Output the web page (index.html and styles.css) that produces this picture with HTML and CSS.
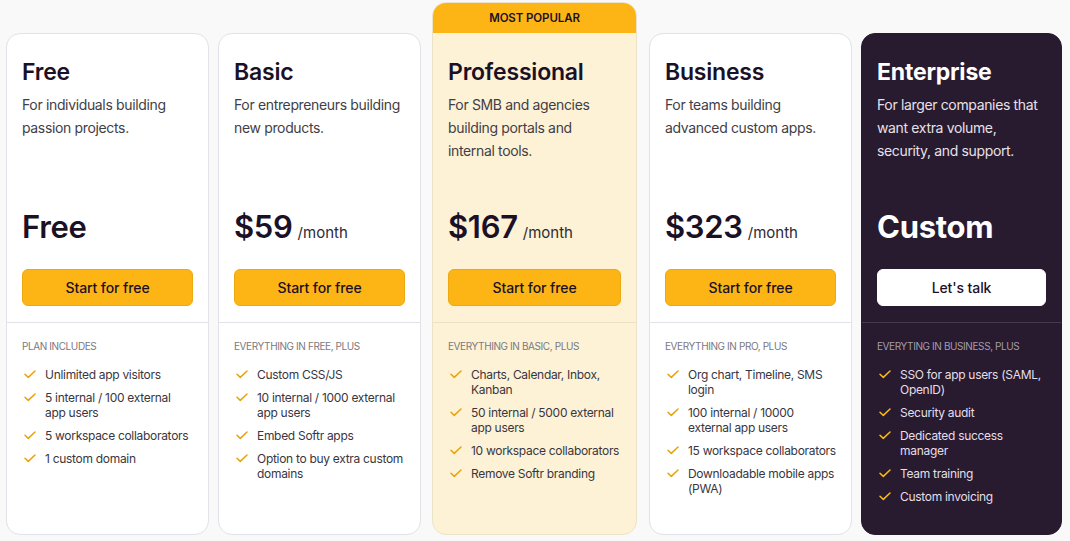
FILE: index.html
```html
<!DOCTYPE html>
<html lang="en">
<head>
<meta charset="utf-8">
<title>Pricing</title>
<link rel="stylesheet" href="styles.css">
</head>
<body>
<div class="plans">
  <div class="card">
    <div class="top">
      <h2 class="name">Free</h2>
      <p class="desc">For individuals building passion projects.</p>
      <div class="price"><span class="amount">Free</span></div>
      <a class="btn">Start for free</a>
    </div>
    <div class="features">
      <div class="feat-head">Plan includes</div>
      <ul class="list">
        <li><svg class="check" viewBox="0 0 12 9"><path d="M1 4.2 L4.3 7.4 L11 1"/></svg><span>Unlimited app visitors</span></li>
        <li><svg class="check" viewBox="0 0 12 9"><path d="M1 4.2 L4.3 7.4 L11 1"/></svg><span>5 internal / 100 external app users</span></li>
        <li><svg class="check" viewBox="0 0 12 9"><path d="M1 4.2 L4.3 7.4 L11 1"/></svg><span>5 workspace collaborators</span></li>
        <li><svg class="check" viewBox="0 0 12 9"><path d="M1 4.2 L4.3 7.4 L11 1"/></svg><span>1 custom domain</span></li>
      </ul>
    </div>
  </div>

  <div class="card">
    <div class="top">
      <h2 class="name">Basic</h2>
      <p class="desc">For entrepreneurs building new products.</p>
      <div class="price"><span class="amount">$59</span><span class="per">/month</span></div>
      <a class="btn">Start for free</a>
    </div>
    <div class="features">
      <div class="feat-head">Everything in Free, plus</div>
      <ul class="list">
        <li><svg class="check" viewBox="0 0 12 9"><path d="M1 4.2 L4.3 7.4 L11 1"/></svg><span>Custom CSS/JS</span></li>
        <li><svg class="check" viewBox="0 0 12 9"><path d="M1 4.2 L4.3 7.4 L11 1"/></svg><span>10 internal / 1000 external app users</span></li>
        <li><svg class="check" viewBox="0 0 12 9"><path d="M1 4.2 L4.3 7.4 L11 1"/></svg><span>Embed Softr apps</span></li>
        <li><svg class="check" viewBox="0 0 12 9"><path d="M1 4.2 L4.3 7.4 L11 1"/></svg><span>Option to buy extra custom domains</span></li>
      </ul>
    </div>
  </div>

  <div class="card popular">
    <div class="badge">Most popular</div>
    <div class="top">
      <h2 class="name">Professional</h2>
      <p class="desc">For SMB and agencies building portals and internal tools.</p>
      <div class="price"><span class="amount">$167</span><span class="per">/month</span></div>
      <a class="btn">Start for free</a>
    </div>
    <div class="features">
      <div class="feat-head">Everything in Basic, plus</div>
      <ul class="list">
        <li><svg class="check" viewBox="0 0 12 9"><path d="M1 4.2 L4.3 7.4 L11 1"/></svg><span>Charts, Calendar, Inbox, Kanban</span></li>
        <li><svg class="check" viewBox="0 0 12 9"><path d="M1 4.2 L4.3 7.4 L11 1"/></svg><span>50 internal / 5000 external app users</span></li>
        <li><svg class="check" viewBox="0 0 12 9"><path d="M1 4.2 L4.3 7.4 L11 1"/></svg><span>10 workspace collaborators</span></li>
        <li><svg class="check" viewBox="0 0 12 9"><path d="M1 4.2 L4.3 7.4 L11 1"/></svg><span>Remove Softr branding</span></li>
      </ul>
    </div>
  </div>

  <div class="card">
    <div class="top">
      <h2 class="name">Business</h2>
      <p class="desc">For teams building advanced custom apps.</p>
      <div class="price"><span class="amount">$323</span><span class="per">/month</span></div>
      <a class="btn">Start for free</a>
    </div>
    <div class="features">
      <div class="feat-head">Everything in Pro, plus</div>
      <ul class="list">
        <li><svg class="check" viewBox="0 0 12 9"><path d="M1 4.2 L4.3 7.4 L11 1"/></svg><span>Org chart, Timeline, SMS login</span></li>
        <li><svg class="check" viewBox="0 0 12 9"><path d="M1 4.2 L4.3 7.4 L11 1"/></svg><span>100 internal / 10000 external app users</span></li>
        <li><svg class="check" viewBox="0 0 12 9"><path d="M1 4.2 L4.3 7.4 L11 1"/></svg><span>15 workspace collaborators</span></li>
        <li><svg class="check" viewBox="0 0 12 9"><path d="M1 4.2 L4.3 7.4 L11 1"/></svg><span>Downloadable mobile apps (PWA)</span></li>
      </ul>
    </div>
  </div>

  <div class="card dark">
    <div class="top">
      <h2 class="name">Enterprise</h2>
      <p class="desc">For larger companies that want extra volume, security, and support.</p>
      <div class="price"><span class="amount">Custom</span></div>
      <a class="btn">Let's talk</a>
    </div>
    <div class="features">
      <div class="feat-head">Everyting in Business, plus</div>
      <ul class="list">
        <li><svg class="check" viewBox="0 0 12 9"><path d="M1 4.2 L4.3 7.4 L11 1"/></svg><span>SSO for app users (SAML, OpenID)</span></li>
        <li><svg class="check" viewBox="0 0 12 9"><path d="M1 4.2 L4.3 7.4 L11 1"/></svg><span>Security audit</span></li>
        <li><svg class="check" viewBox="0 0 12 9"><path d="M1 4.2 L4.3 7.4 L11 1"/></svg><span>Dedicated success manager</span></li>
        <li><svg class="check" viewBox="0 0 12 9"><path d="M1 4.2 L4.3 7.4 L11 1"/></svg><span>Team training</span></li>
        <li><svg class="check" viewBox="0 0 12 9"><path d="M1 4.2 L4.3 7.4 L11 1"/></svg><span>Custom invoicing</span></li>
      </ul>
    </div>
  </div>
</div>
</body>
</html>
```

FILE: styles.css
```css
* { box-sizing: border-box; }
html, body { margin: 0; padding: 0; }
body {
  background: #f9f9fa;
  font-family: Inter, "Liberation Sans", sans-serif;
  color: #1b1126;
  width: 1070px;
  height: 541px;
  overflow: hidden;
}
.plans {
  display: flex;
  gap: 9px;
  padding: 2px 0 0 6px;
  height: 535px;
}
.card {
  flex: 0 0 203px;
  margin-top: 31px;
  background: #fff;
  border: 1px solid #e2e2e8;
  border-radius: 14px;
  display: flex;
  flex-direction: column;
  overflow: hidden;
}
.card.popular {
  flex-basis: 205px;
  margin: 0 3px 0 2px;
  background: #fdf2d6;
  border-color: #ece3c9;
}
.card.dark {
  flex-basis: 201px;
  background: #281a2f;
  border-color: #281a2f;
  color: #fff;
}
.badge {
  height: 31px;
  margin: -1px -1px 0;
  background: #fdb515;
  border-radius: 14px 14px 0 0;
  display: flex;
  align-items: center;
  justify-content: center;
  font-size: 11.5px;
  font-weight: 600;
  text-transform: uppercase;
  color: #1b1126;
  letter-spacing: -0.1px;
}
.top {
  padding: 24px 15px 16px;
  border-bottom: 1px solid #e2e2e8;
}
.popular .top {
  padding-top: 25px;
  border-bottom-color: #ebe0c4;
}
.dark .top { border-bottom-color: #46384d; }
.name {
  margin: 0;
  font-size: 23px;
  line-height: 28px;
  font-weight: 600;
  letter-spacing: -0.2px;
}
.dark .name { font-weight: 700; }
.desc {
  margin: 7px 0 0;
  height: 115px;
  font-size: 14px;
  line-height: 23px;
  color: #423e46;
  letter-spacing: -0.35px;
}
.dark .desc { color: #e6e1e8; }
.price {
  display: flex;
  align-items: baseline;
  gap: 5px;
  height: 36px;
  margin-top: 1px;
}
.amount {
  font-size: 31px;
  line-height: 36px;
  font-weight: 600;
  letter-spacing: -0.3px;
}
.dark .amount { font-weight: 700; }
.per {
  font-size: 15px;
  color: #2e2a32;
}
.btn {
  display: flex;
  align-items: center;
  justify-content: center;
  margin-top: 24px;
  height: 37px;
  background: #fdb515;
  border: 1px solid #eea90f;
  border-radius: 6px;
  font-size: 14px;
  font-weight: 500;
  color: #1b1126;
  letter-spacing: -0.1px;
}
.dark .btn {
  background: #fff;
  border-color: #fff;
}
.features {
  padding: 16px 15px 0;
}
.feat-head {
  font-size: 10px;
  line-height: 14px;
  text-transform: uppercase;
  color: #7b7880;
  letter-spacing: -0.4px;
}
.dark .feat-head { color: #a59daa; }
.list {
  list-style: none;
  margin: 14px 0 0;
  padding: 0;
  display: flex;
  flex-direction: column;
  gap: 8px;
}
.list li {
  display: flex;
  align-items: flex-start;
  font-size: 12px;
  line-height: 15px;
  color: #3a3640;
  letter-spacing: -0.3px;
}
.dark .list li { color: #e4dfe7; }
.check {
  flex: 0 0 12px;
  width: 12px;
  height: 9px;
  margin: 3px 9px 0 2px;
  fill: none;
  stroke: #e8a30a;
  stroke-width: 1.5;
  stroke-linecap: round;
  stroke-linejoin: round;
}
.dark .check { stroke: #fbb817; }
```
